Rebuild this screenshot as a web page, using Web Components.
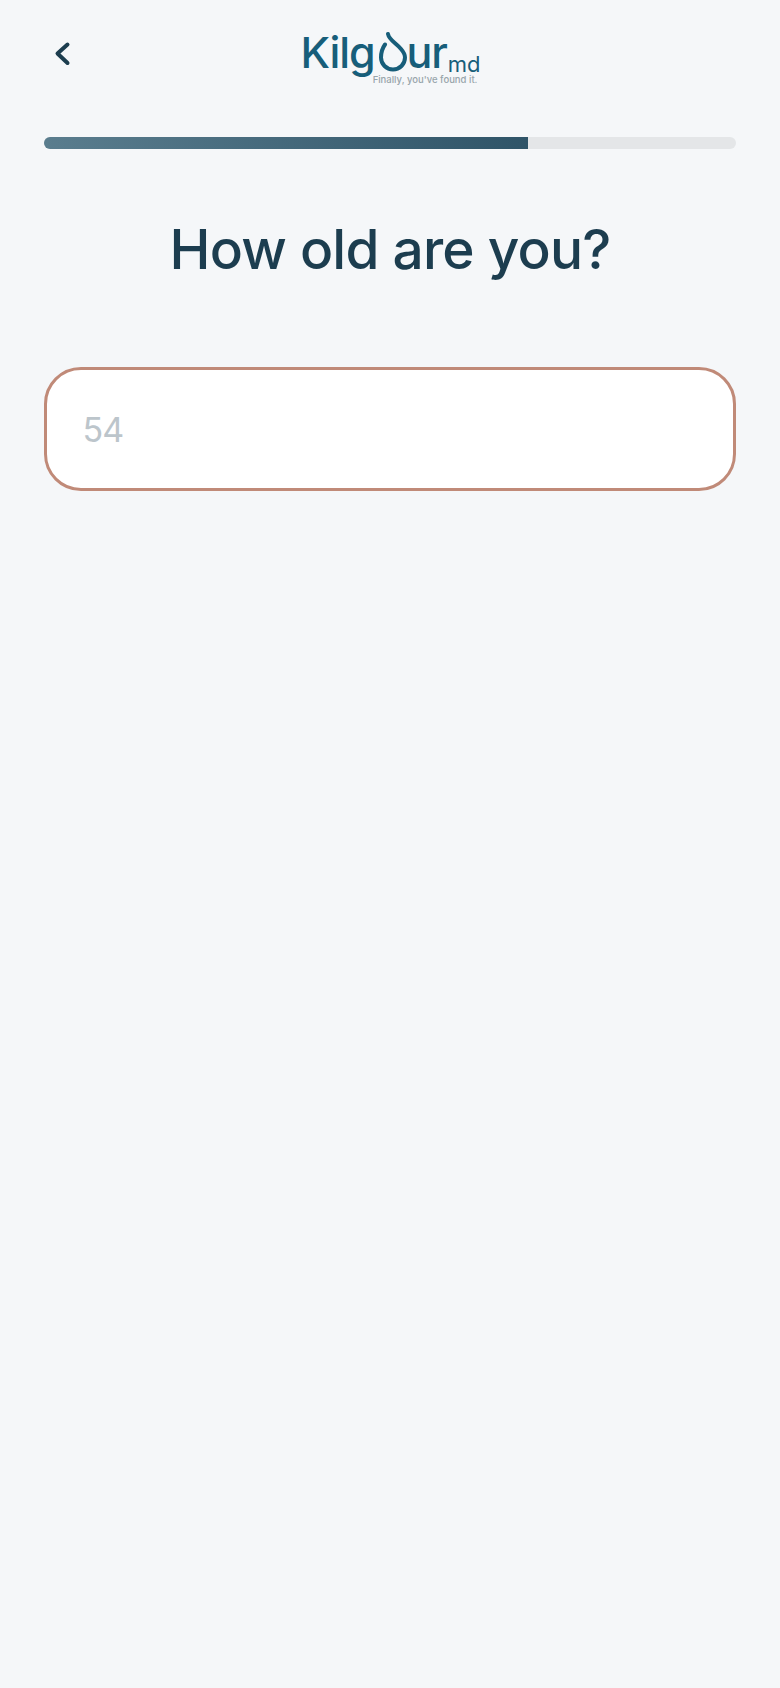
<!DOCTYPE html>
<html lang="en"><head><meta charset="utf-8"><title>Kilgour MD</title>
<style>
html,body{margin:0;padding:0;background:#f5f7f9}
body{font-family:"Inter",sans-serif}
</style></head><body>
<quiz-page>
<app-header></app-header>
<progress-bar value="70"></progress-bar>
<h-title>How old are you?</h-title>
<age-field placeholder="54"></age-field>
</quiz-page>
<script>
function def(name,html,init){
  customElements.define(name,class extends HTMLElement{
    constructor(){super();this.attachShadow({mode:'open'}).innerHTML=html;}
    connectedCallback(){if(init)init(this);}
  });
}
def('quiz-page',`<style>:host{display:flex;flex-direction:column;min-height:1688px;box-sizing:border-box;padding:0 44px;background:#f5f7f9}</style><slot></slot>`);
def('app-header',`<style>
:host{display:grid;grid-template-columns:1fr auto 1fr;align-items:start;height:137px;box-sizing:border-box;padding-top:32px}
.back{width:44px;height:44px;display:block}
.logo{position:relative;width:177px;height:54px;margin:-2px 0 0 -2px;color:#175e7a;font-family:"Inter",sans-serif;display:flex;align-items:flex-start}
.word{display:flex;align-items:flex-start;font-size:43px;line-height:44px;letter-spacing:-1.100px;font-weight:450;height:44px}
.word svg{display:block;width:28px;height:40px;margin:2px 0 0 4px}
.md{font-size:22px;line-height:24px;margin:22px 0 0 1px;font-weight:400}
.tag{position:absolute;right:0;top:44px;font:500 9.500px/12px "Inter",sans-serif;color:#98a5ab;white-space:nowrap}
</style>
<svg class="back" viewBox="0 0 44 44" aria-hidden="true"><path d="M23.500 12.500 L13.500 21.500 L23.500 31" fill="none" stroke="#1c3d4f" stroke-width="4" stroke-linecap="round" stroke-linejoin="round"/></svg>
<div class="logo"><div class="word"><span>Kilg</span><svg viewBox="0 0 28 40" aria-hidden="true"><path d="M9 2C10 8 17 11 22 17C25 20.500 26 23 26 25.500A12 12 0 0 1 2 25.500C2 20 3.500 16 6 12.500" fill="none" stroke="#175e7a" stroke-width="4" stroke-linecap="round"/></svg><span>ur</span></div><span class="md">md</span><span class="tag">Finally, you've found it.</span></div>
<span></span>`);
def('progress-bar',`<style>
:host{display:block;height:12px;width:692px;border-radius:6px;background:#e4e6e8;overflow:hidden}
.fill{height:100%;width:484px;background:linear-gradient(90deg,#5a7d8e,#2f5468)}
</style><div class="fill"></div>`);
def('h-title',`<style>
:host{display:block;margin-top:68px;text-align:center;color:#1c3d4f;font:500 55px/64px "Inter",sans-serif;letter-spacing:-.800px}
</style><slot></slot>`);
def('age-field',`<style>
:host{display:block;margin-top:86px}
input{display:block;width:692px;height:124px;box-sizing:border-box;border:3.500px solid #c08a78;border-radius:37px;background:#fff;padding:0 35.500px;font:400 34px "Inter",sans-serif;letter-spacing:-1px;color:#1c3d4f;outline:none}
input::placeholder{color:#bcc5cb;opacity:1}
</style><input type="text" inputmode="numeric">`,el=>{el.shadowRoot.querySelector('input').placeholder=el.getAttribute('placeholder')||'';});
</script>
</body></html>
